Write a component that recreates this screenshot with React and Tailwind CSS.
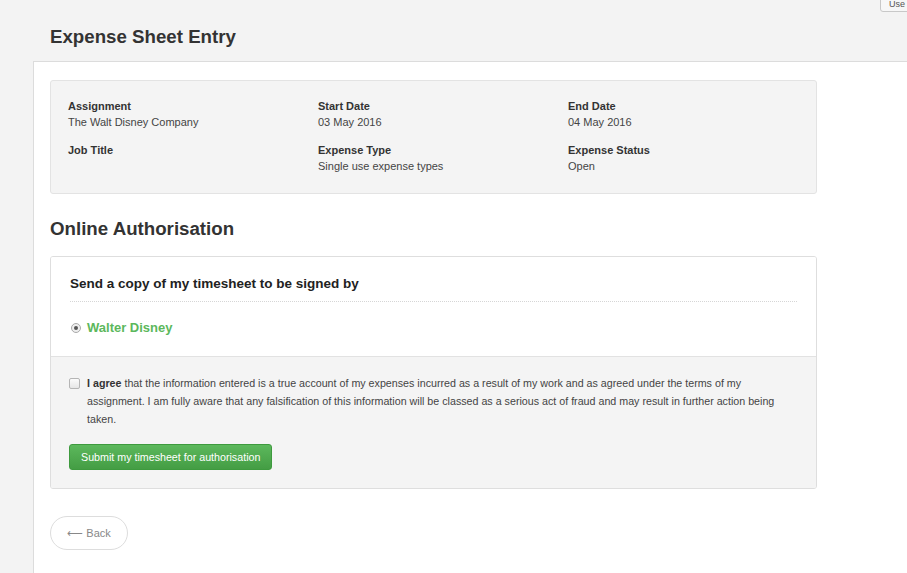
export default function App() {
  const info = [
    { label: 'Assignment', value: 'The Walt Disney Company' },
    { label: 'Start Date', value: '03 May 2016' },
    { label: 'End Date', value: '04 May 2016' },
    { label: 'Job Title', value: '' },
    { label: 'Expense Type', value: 'Single use expense types' },
    { label: 'Expense Status', value: 'Open' },
  ]

  return (
    <div className="h-[573px] w-[907px] overflow-hidden bg-[#f3f3f3] font-['Liberation_Sans',Arial,sans-serif] text-[#333]">
      {/* Top bar */}
      <div className="relative h-[61px]">
        <div className="absolute left-[880px] top-[-8px] h-[20px] w-[48px] rounded-[3px] border border-[#c8c8c8] bg-[#f7f7f7] pl-[8px] text-[9px] leading-[22px] text-[#555]">
          Use
        </div>
        <h1 className="pl-[50px] pt-[26px] text-[18.7px] font-bold leading-[22px] text-[#333]">
          Expense Sheet Entry
        </h1>
      </div>

      {/* Main panel */}
      <div className="ml-[33px] h-[512px] border-l border-t border-[#dcdcdc] bg-white pl-[16px] pt-[18px]">
        <div className="w-[767px]">
          {/* Details */}
          <div className="grid grid-cols-[250px_250px_1fr] gap-y-[12px] rounded-[3px] border border-[#e3e3e3] bg-[#f4f4f4] px-[17px] pb-[19px] pt-[17px]">
            {info.map(item => (
              <div key={item.label} className="h-[32px] text-[11px] leading-[16px]">
                <div className="font-bold text-[#333]">{item.label}</div>
                <div className="text-[#444]">{item.value}</div>
              </div>
            ))}
          </div>

          <h2 className="mt-[24px] text-[18.7px] font-bold leading-[22px] text-[#333]">
            Online Authorisation
          </h2>

          {/* Authorisation card */}
          <div className="mt-[16px] overflow-hidden rounded-[3px] border border-[#dedede]">
            <div className="bg-white px-[19px] pt-[19px]">
              <h3 className="text-[13.5px] font-bold leading-[16px] text-[#222]">
                Send a copy of my timesheet to be signed by
              </h3>
              <div className="mt-[9px] border-t border-dotted border-[#d6d6d6]" />
              <label className="flex h-[54px] items-center gap-[6px] pb-[2px] pl-[1px]">
                <span className="flex h-[10px] w-[10px] items-center justify-center rounded-full border border-[#aaa] bg-[#eee]">
                  <span className="h-[4px] w-[4px] rounded-full bg-[#555]" />
                </span>
                <span className="text-[13px] font-bold text-[#5cb85c]">Walter Disney</span>
              </label>
            </div>

            <div className="border-t border-[#e2e2e2] bg-[#f4f4f4] px-[18px] pb-[18px] pt-[17px]">
              <div className="flex gap-[7px]">
                <span className="mt-[4px] h-[11px] w-[11px] shrink-0 rounded-[2px] border border-[#b5b5b5] bg-gradient-to-b from-[#fbfbfb] to-[#e6e6e6]" />
                <p className="text-[10.7px] leading-[18px] text-[#444]">
                  <b className="text-[#333]">I agree</b> that the information entered is a true account of my expenses incurred as a result of my work and as agreed under the terms of my assignment. I am fully aware that any falsification of this information will be classed as a serious act of fraud and may result in further action being taken.
                </p>
              </div>
              <button className="mt-[16px] h-[26px] rounded-[3px] border border-[#3e9a3e] bg-gradient-to-b from-[#5cb85c] to-[#449d44] px-[11px] text-[10.7px] text-white">
                Submit my timesheet for authorisation
              </button>
            </div>
          </div>

          {/* Back */}
          <button className="mt-[27px] flex h-[34px] w-[78px] items-center justify-center rounded-full border border-[#ddd] bg-white text-[11px] text-[#888]">
            ⟵ Back
          </button>
        </div>
      </div>
    </div>
  )
}
